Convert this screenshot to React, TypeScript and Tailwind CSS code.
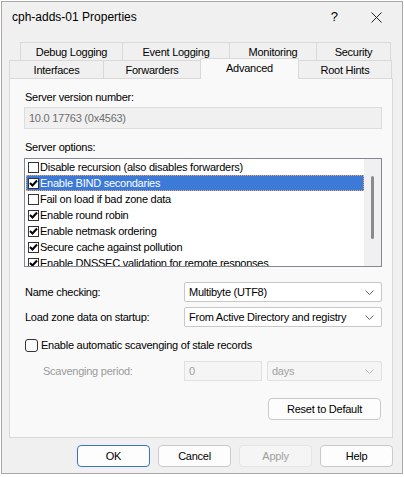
import React from "react";

const OPTIONS = [
  { label: "Disable recursion (also disables forwarders)", checked: false },
  { label: "Enable BIND secondaries", checked: true, selected: true },
  { label: "Fail on load if bad zone data", checked: false },
  { label: "Enable round robin", checked: true },
  { label: "Enable netmask ordering", checked: true },
  { label: "Secure cache against pollution", checked: true },
  { label: "Enable DNSSEC validation for remote responses", checked: true },
];

function Chevron({ color = "#606060" }: { color?: string }) {
  return (
    <svg width="9" height="5" viewBox="0 0 9 5">
      <polyline points="0.5,0.5 4.5,4.5 8.5,0.5" fill="none" stroke={color} strokeWidth="1" />
    </svg>
  );
}

function Check() {
  return (
    <svg width="9" height="9" viewBox="0 0 9 9">
      <polyline points="1,4 3.5,6.5 8,1.5" fill="none" stroke="#000" strokeWidth="2" />
    </svg>
  );
}

function Tab({ label, w, active }: { label: string; w: string; active?: boolean }) {
  if (active) {
    return (
      <div
        className={`${w} h-[21px] -mt-[2px] -ml-[1px] relative z-10 bg-[#f9f9f9] border border-b-0 border-[#d9d9d9] flex items-start justify-center pt-[2px]`}
      >
        {label}
      </div>
    );
  }
  return (
    <div className={`${w} h-[19px] -ml-[1px] first:ml-0 bg-[#f0f0f0] border border-[#d9d9d9] flex items-center justify-center`}>
      {label}
    </div>
  );
}

function Select({ value, w, disabled }: { value: string; w: string; disabled?: boolean }) {
  return (
    <div
      className={`${w} h-[20px] border rounded-[2px] flex items-center justify-between pl-[4px] pr-[7px] ${
        disabled ? "border-[#e0e0e0] bg-[#f5f5f5] text-[#a0a0a0]" : "border-[#c8c8c8] bg-white"
      }`}
    >
      <span>{value}</span>
      <Chevron color={disabled ? "#b8b8b8" : "#606060"} />
    </div>
  );
}

function Button({ label, w, primary, disabled }: { label: string; w: string; primary?: boolean; disabled?: boolean }) {
  return (
    <div
      className={`${w} h-[22px] rounded-[4px] border flex items-center justify-center ${
        primary
          ? "border-[#3a73c9] bg-[#fdfdfd]"
          : disabled
          ? "border-[#e5e5e5] bg-[#f5f5f5] text-[#a0a0a0]"
          : "border-[#cacaca] bg-[#fdfdfd]"
      }`}
    >
      {label}
    </div>
  );
}

export default function App() {
  return (
    <div className="w-[404px] h-[477px] bg-white pt-[1px] pl-[1px] font-['Liberation_Sans',Arial,sans-serif] text-[11px] tracking-[-0.25px] text-black leading-[14px]">
      <div className="w-[402px] h-[473px] border border-[#a9a9a9] bg-[#f0f0f0] flex flex-col">
        {/* title bar */}
        <div className="h-[30px] flex items-center pl-[10px] pr-[20px]">
          <span className="text-[12px] tracking-normal">cph-adds-01 Properties</span>
          <span className="ml-auto text-[13px] tracking-normal mr-[33px]">?</span>
          <svg width="11" height="11" viewBox="0 0 11 11">
            <path d="M0.5 0.5 L10.5 10.5 M10.5 0.5 L0.5 10.5" stroke="#222" strokeWidth="1" />
          </svg>
        </div>

        {/* tabs */}
        <div className="mt-[10px] flex flex-col">
          <div className="flex ml-[18px]">
            <Tab label="Debug Logging" w="w-[103px]" />
            <Tab label="Event Logging" w="w-[108px]" />
            <Tab label="Monitoring" w="w-[88px]" />
            <Tab label="Security" w="w-[75px]" />
          </div>
          <div className="flex ml-[7px] -mt-[1px]">
            <Tab label="Interfaces" w="w-[95px]" />
            <Tab label="Forwarders" w="w-[98px]" />
            <Tab label="Advanced" w="w-[99px]" active />
            <Tab label="Root Hints" w="w-[94px]" />
          </div>
        </div>

        {/* panel */}
        <div className="ml-[7px] -mt-[1px] w-[384px] h-[360px] bg-[#f9f9f9] border border-[#d9d9d9] flex flex-col pl-[14px] pr-[10px]">
          <div className="mt-[11px] pl-[1px]">Server version number:</div>
          <div className="mt-[3px] w-[358px] h-[22px] border border-[#dcdcdc] bg-[#f0f0f0] flex items-center pl-[4px] text-[#6d6d6d]">
            10.0 17763 (0x4563)
          </div>

          <div className="mt-[11px] pl-[1px]">Server options:</div>
          <div className="mt-[4px] w-[358px] h-[109px] border border-[#828790] bg-white flex overflow-hidden">
            <div className="flex-1 flex flex-col pl-[1px] pt-0">
              {OPTIONS.map((o) => (
                <div
                  key={o.label}
                  className={`h-[16px] shrink-0 flex items-center pl-[1px] whitespace-nowrap ${
                    o.selected ? "bg-[#3d79d6] text-white border border-dotted border-[#f0a860]" : "border border-transparent"
                  }`}
                >
                  <div className="w-[11px] h-[11px] border border-[#333] bg-white flex items-center justify-center mr-[1px]">
                    {o.checked && <Check />}
                  </div>
                  <span>{o.label}</span>
                </div>
              ))}
            </div>
            <div className="w-[17px] bg-[#f0f0f0] flex justify-center pt-[17px]">
              <div className="w-[3px] h-[63px] bg-[#8a8a8a] rounded-full" />
            </div>
          </div>

          <div className="mt-[15px] flex items-center justify-between">
            <span className="pl-[1px]">Name checking:</span>
            <Select value="Multibyte (UTF8)" w="w-[198px]" />
          </div>
          <div className="mt-[5px] flex items-center justify-between">
            <span className="pl-[1px]">Load zone data on startup:</span>
            <Select value="From Active Directory and registry" w="w-[198px]" />
          </div>

          <div className="mt-[11px] flex items-center pl-[1px]">
            <div className="w-[13px] h-[13px] rounded-[3px] border border-[#333] bg-[#fbfbfb] mr-[3px]" />
            <span>Enable automatic scavenging of stale records</span>
          </div>

          <div className="mt-[9px] flex items-center">
            <span className="pl-[19px] text-[#9a9a9a] w-[160px]">Scavenging period:</span>
            <div className="w-[78px] h-[20px] border border-[#e0e0e0] bg-[#f5f5f5] text-[#a0a0a0] flex items-center pl-[4px]">
              0
            </div>
            <div className="ml-[5px]">
              <Select value="days" w="w-[115px]" disabled />
            </div>
          </div>

          <div className="mt-[17px] flex justify-end pr-[1px]">
            <Button label="Reset to Default" w="w-[113px]" />
          </div>
        </div>

        {/* dialog buttons */}
        <div className="mt-[7px] flex justify-end gap-[8px] pr-[9px]">
          <Button label="OK" w="w-[73px]" primary />
          <Button label="Cancel" w="w-[73px]" />
          <Button label="Apply" w="w-[73px]" disabled />
          <Button label="Help" w="w-[73px]" />
        </div>
      </div>
    </div>
  );
}
